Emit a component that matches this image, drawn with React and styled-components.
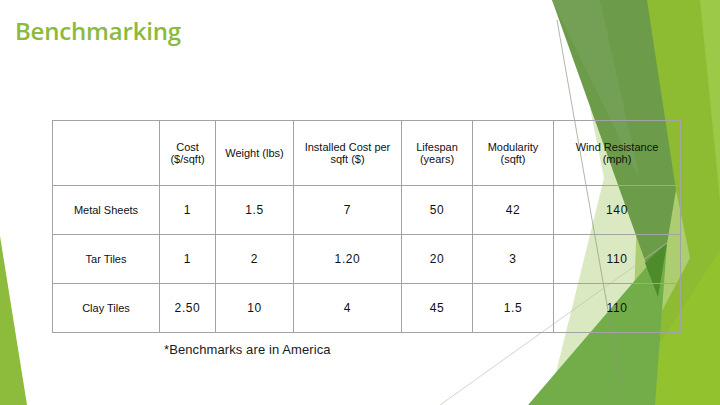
import React from "react";
import styled, { createGlobalStyle } from "styled-components";

const GlobalStyle = createGlobalStyle`
  html, body {
    margin: 0;
    padding: 0;
    background: #ffffff;
  }
  body {
    font-family: "Liberation Sans", Arial, sans-serif;
  }
`;

const Slide = styled.div`
  position: relative;
  width: 720px;
  height: 405px;
  overflow: hidden;
  background: #ffffff;
`;

const Backdrop = styled.svg`
  position: absolute;
  left: 0;
  top: 0;
  width: 720px;
  height: 405px;
  z-index: 0;
`;

const Content = styled.div`
  position: relative;
  z-index: 1;
  display: flex;
  flex-direction: column;
  padding: 15px 0 0 15px;
`;

const Title = styled.h1`
  margin: 0;
  font-family: "Open Sans", "DejaVu Sans", sans-serif;
  font-weight: 600;
  font-size: 24px;
  line-height: 32px;
  color: #8cba3d;
  letter-spacing: -0.2px;
`;

const Table = styled.table`
  margin: 73px 0 0 37px;
  width: 628px;
  table-layout: fixed;
  border-collapse: collapse;
  border: 1px solid #a3a3a3;
  background: transparent;
`;

const Row = styled.tr`
  height: ${p => p.$h}px;
`;

const Cell = styled.td`
  border: 1px solid #a3a3a3;
  padding: 0 4px;
  text-align: center;
  vertical-align: middle;
  color: #111;
  font-size: ${p => (p.$num ? 12 : 11)}px;
  line-height: 12px;
  letter-spacing: ${p => (p.$num ? 0.6 : 0)}px;
`;

const Note = styled.p`
  margin: 9px 0 0 149px;
  font-size: 13px;
  line-height: 16px;
  color: #1a1a1a;
  letter-spacing: 0.1px;
`;

const widths = [107, 56, 78, 108, 71, 81, 127];

const headers = [
  "",
  <>Cost<br />($/sqft)</>,
  "Weight (lbs)",
  <>Installed Cost per<br />sqft ($)</>,
  <>Lifespan<br />(years)</>,
  <>Modularity<br />(sqft)</>,
  <>Wind Resistance<br />(mph)</>,
];

const rows = [
  ["Metal Sheets", "1", "1.5", "7", "50", "42", "140"],
  ["Tar Tiles", "1", "2", "1.20", "20", "3", "110"],
  ["Clay Tiles", "2.50", "10", "4", "45", "1.5", "110"],
];

const Shapes = () => (
  <Backdrop viewBox="0 0 720 405">
    <polygon points="0,236 0,405 27,405" fill="#8dbb3c" />
    <polygon points="645,0 720,0 720,405 630,405" fill="#8dbc33" />
    <polygon points="700,0 720,0 720,200" fill="#9cc947" />
    <polygon points="620,405 720,250 720,405" fill="#92c22e" />
    <polygon points="590,108 604,178 548,405 612,405 690,258 676,190" fill="rgb(193,218,153)" opacity="0.6" />
    <polygon points="552,0 647,0 676,190 658,297" fill="#6c9c4a" />
    <polygon points="552,0 600,0 640,180" fill="#76a359" opacity="0.7" />
    <polygon points="528,405 667,243 655,405" fill="#73ad4a" />
    <polygon points="645,263 667,243 658,297" fill="#4e8b2b" />
    <line x1="557" y1="20" x2="622" y2="390" stroke="#8a9a80" strokeWidth="0.7" />
    <line x1="440" y1="405" x2="667" y2="243" stroke="#b8c4b0" strokeWidth="0.7" />
  </Backdrop>
);

const App = () => {
  return (
    <Slide>
      <GlobalStyle />
      <Shapes />
      <Content>
        <Title>Benchmarking</Title>
        <Table>
          <colgroup>
            {widths.map((w, i) => (
              <col key={i} style={{ width: w }} />
            ))}
          </colgroup>
          <tbody>
            <Row $h={65}>
              {headers.map((h, i) => (
                <Cell key={i}>{h}</Cell>
              ))}
            </Row>
            {rows.map(r => (
              <Row $h={49} key={r[0]}>
                {r.map((v, i) => (
                  <Cell key={i} $num={i > 0}>
                    {v}
                  </Cell>
                ))}
              </Row>
            ))}
          </tbody>
        </Table>
        <Note>*Benchmarks are in America</Note>
      </Content>
    </Slide>
  );
};

export default App;
